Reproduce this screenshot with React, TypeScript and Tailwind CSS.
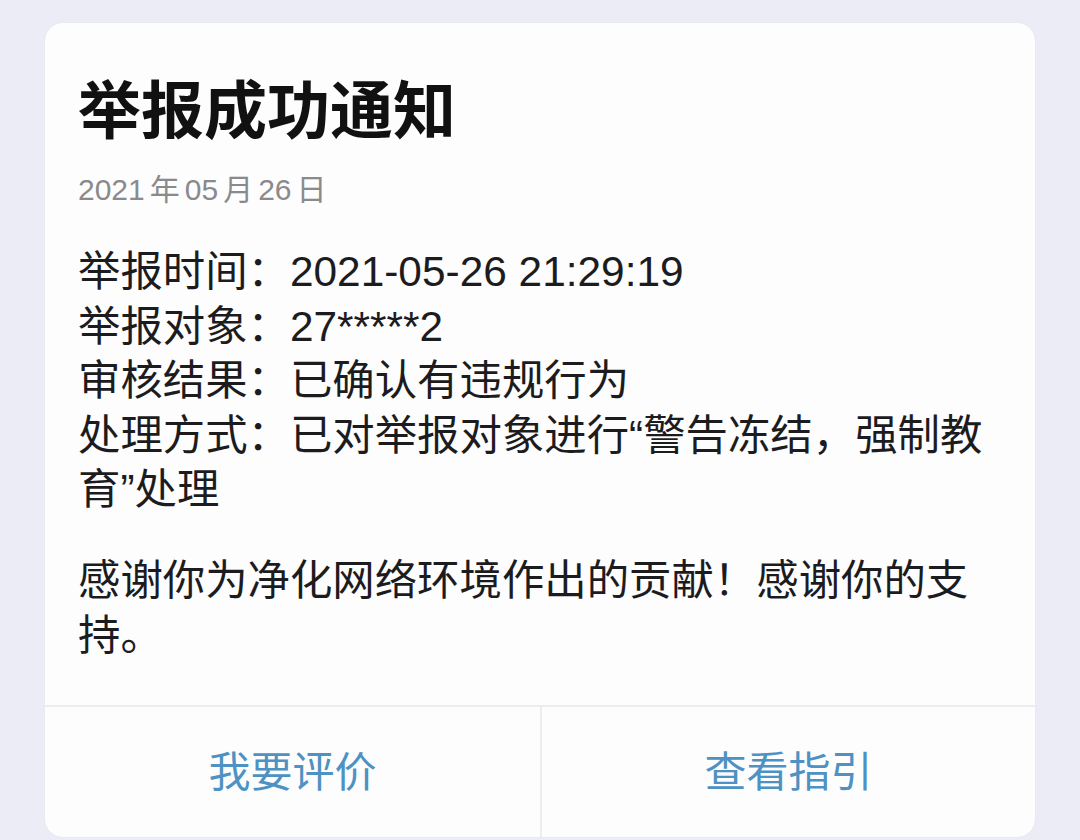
import React from 'react';

const rows = [
  { label: '举报时间：', value: '2021-05-26 21:29:19' },
  { label: '举报对象：', value: '27*****2' },
  { label: '审核结果：', value: '已确认有违规行为' },
  { label: '处理方式：', value: '已对举报对象进行“警告冻结，强制教育”处理' },
];

const App: React.FC = () => {
  return (
    <div
      className="min-h-screen bg-[#ebecf6] pt-[23px] px-[45px]"
      style={{ fontFamily: '"Liberation Sans", "Noto Sans CJK SC", sans-serif' }}
    >
      <div className="bg-[#fdfdfe] rounded-[18px] shadow-[0_0_2px_rgba(0,0,0,0.06)] overflow-hidden">
        <div className="pl-[33px] pr-[39px] pt-[48px] pb-[42px]">
          {/* Title */}
          <h1 className="text-[63px] leading-[80px] font-bold text-[#111111]">举报成功通知</h1>

          {/* Date */}
          <div className="mt-[19px] text-[30px] leading-[40px] text-[#8a8a8c]">
            2021<span className="mx-[5px]">年</span>05<span className="mx-[5px]">月</span>26
            <span className="ml-[5px]">日</span>
          </div>

          {/* Details */}
          <div className="mt-[35px] text-[42.4px] leading-[54.5px] text-[#1c1c1e]">
            {rows.map((row) => (
              <p key={row.label}>
                {row.label}
                {row.value}
              </p>
            ))}
          </div>

          {/* Thanks */}
          <p className="mt-[36.5px] text-[42.4px] leading-[54.5px] text-[#1c1c1e]">
            感谢你为净化网络环境作出的贡献！感谢你的支持。
          </p>
        </div>

        {/* Actions */}
        <div className="grid grid-cols-2 border-t-2 border-[#ededf0] h-[132px]">
          <button className="flex items-center justify-center text-[42px] text-[#4d92c2]">
            我要评价
          </button>
          <button className="flex items-center justify-center text-[42px] text-[#4d92c2] border-l-2 border-[#ededf0]">
            查看指引
          </button>
        </div>
      </div>
    </div>
  );
};

export default App;
